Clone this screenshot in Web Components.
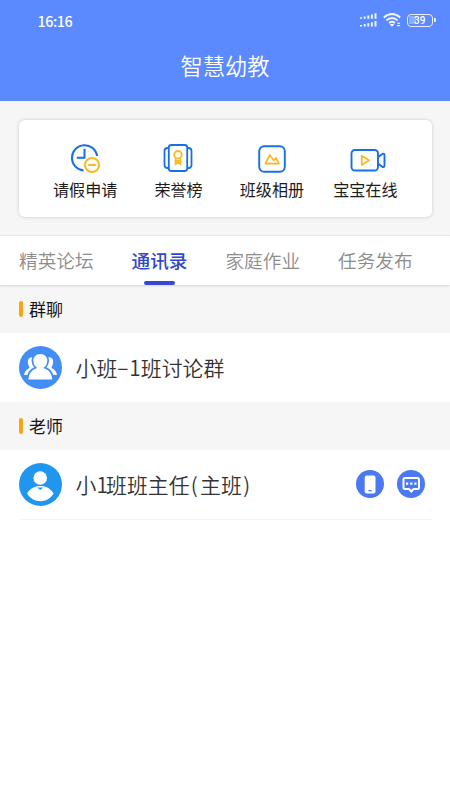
<!DOCTYPE html>
<html lang="zh-CN">
<head>
<meta charset="utf-8">
<title>智慧幼教</title>
<style>
html,body{margin:0;height:100%;background:#fff}
body{font-family:"Noto Sans CJK SC",sans-serif;color:#222}
</style>
</head>
<body>
<kid-app></kid-app>
<script>
const define = (name, html) => {
  const t = document.createElement('template');
  t.innerHTML = '<style>*{box-sizing:border-box}svg{display:block}</style>' + html;
  customElements.define(name, class extends HTMLElement {
    constructor(){ super(); this.attachShadow({mode:'open'}).append(t.content.cloneNode(true)); }
  });
};

define('status-bar', `
<style>
:host{display:flex;height:40px;padding:0 14.5px 0 37.5px;align-items:center;justify-content:space-between;color:#fff}
time{font:500 14.4px/39px "Noto Sans CJK SC",sans-serif;letter-spacing:-.5px}
.r{display:flex;align-items:center;gap:6px}
.b{display:flex;align-items:center}
.c{width:26.5px;height:13px;border:1.5px solid #e8eeff;border-radius:4px;font:500 10px/11px Roboto,sans-serif;text-align:center;background:linear-gradient(90deg,#8fadff 0 0) 1px 1px/7px 8px no-repeat}
.b i{width:2px;height:4px;background:#e8eeff;border-radius:0 1px 1px 0;margin-left:.5px}
</style>
<time>16:16</time>
<div class="r">
<svg width="18" height="14" viewBox="0 0 18 14" stroke="#eef3ff" stroke-width="2"><path d="M2 4.2v1.600M5.700 3.400v2.400M9.300 2.500v3.300M12.900 1.500v4.300M16.500.3v5.500M2 11.900v1.600M5.700 11.100v2.400M9.300 10.200v3.300M12.900 9.200v4.300M16.500 8v5.500"/></svg>
<svg width="18" height="14" viewBox="0 0 18 14" fill="none" stroke="#f3f6ff" stroke-width="1.8"><path d="M.8 4.5Q9-2.5 17.2 4.5M3.4 7.4Q9 2.7 14.6 7.4M6.1 10Q9 7.6 11.9 10"/><path d="M6.7 11h4.6L9 13.7z" fill="#fff" stroke="none"/><path d="M14.4 10.4h2.5M14 12.700h3" stroke-width="1.2"/></svg>
<div class="b"><div class="c">39</div><i></i></div>
</div>`);

define('app-header', `
<style>
:host{display:block;height:101px;background:#5b89ff;color:#fff}
h1{margin:0;text-align:center;font-size:22.3px;font-weight:350;line-height:51px}
</style><status-bar></status-bar><h1><slot></slot></h1>`);

define('tool-card', `
<style>
:host{display:grid;grid-template-columns:repeat(4,1fr);height:96.5px;margin:19px 18px 0 18.5px;padding:20px 20px 0;background:#fff;border-radius:6px;box-shadow:0 0 3px 1px #0000001c}
</style><slot></slot>`);

define('tool-item', `
<style>
:host{display:flex;flex-direction:column;align-items:center;font-size:16.1px;line-height:24px;color:#1c1c1c;white-space:nowrap}
.i{height:36.5px;display:flex;align-items:center}
</style><div class="i"><slot name="icon"></slot></div><slot></slot>`);

define('tab-bar', `
<style>
:host{display:flex;gap:38px;height:50px;margin-top:18px;padding-left:19px;background:#fff;border-top:1px solid #e8e8e8;box-shadow:0 1px 2px #00000022;position:relative}
</style><slot></slot>`);

define('tab-item', `
<style>
:host{display:flex;flex-direction:column;align-items:center;font-size:18.65px;font-weight:350;line-height:47px;height:50px;color:#8c8c8c;white-space:nowrap}
:host([active]){color:#3248c8;font-weight:500}
:host([active])::after{content:"";width:31px;height:4px;border-radius:2px;background:#3649cf;margin-top:-1.5px;margin-right:1px;flex:none}
</style><slot></slot>`);

define('section-title', `
<style>
:host{display:flex;align-items:center;gap:6px;height:48.5px;padding:.5px 19px 0;background:#f6f6f6;font-size:17px;line-height:24px;color:#151515}
i{width:4px;height:16.5px;border-radius:2px;background:#f9a413}
</style><i></i><span><slot></slot></span>`);

define('contact-row', `
<style>
:host{display:flex;align-items:center;height:68.5px;margin:0 18px 0 19px}
:host([line]){border-bottom:1px solid #f3f3f3;height:69.5px}
.n{margin-left:13.5px;flex:1;font-size:20.9px;font-weight:350;color:#333;white-space:nowrap}
.a{display:flex;gap:13px;margin-right:7px}
</style><slot name="avatar"></slot><div class="n"><slot></slot></div><div class="a"><slot name="action"></slot></div>`);

define('kid-app', `
<style>
:host{display:block;min-height:800px;background:#fff}
.top{background:#f6f6f6;overflow:hidden}
tab-bar{z-index:1}
.one{letter-spacing:-1.8px}
.p{letter-spacing:2.4px;margin-left:1px}
.q{margin-left:1.5px}
.d{vertical-align:1.5px;line-height:1;letter-spacing:.8px}
</style>
<app-header>智慧幼教</app-header>
<div class="top">
<tool-card>
<tool-item><svg slot="icon" width="30" height="32" viewBox="0 0 30 32" fill="none" stroke-width="2" style="margin-top:-1px"><path d="M13.5 28.5A12.7 12.7 0 1 1 27.2 14" stroke="#1870e5"/><path d="M14.5 6.8v9H6.8" stroke="#1870e5"/><circle cx="22" cy="23" r="7" stroke="#f8b921"/><path d="M18.3 23h7.5" stroke="#f8b921"/></svg>请假申请</tool-item>
<tool-item><svg slot="icon" width="30" height="30" viewBox="0 0 30 30" fill="none" stroke="#1870e5" stroke-width="1.8" style="margin-right:1px"><rect x="5.8" y="2" width="18.4" height="26" rx="2.5"/><path d="M5.5 5H4Q1.5 5.5 1.5 8v14Q1.5 24.5 4 25h1.5M24.5 5H26q2.5.5 2.5 3v14q0 2.500-2.500 3h-1.500"/><g stroke="#f8b921"><circle cx="15" cy="11.800" r="3.800"/><path d="M12.600 15.200v5.900l2.400-1.500 2.400 1.500v-5.900M12.600 17.800h4.800"/></g></svg>荣誉榜</tool-item>
<tool-item><svg slot="icon" width="28" height="28" viewBox="0 0 28 28" fill="none" stroke="#1870e5" stroke-width="1.9" stroke-linejoin="round" style="margin-top:1px"><rect x="1.200" y="1.200" width="25.600" height="25.600" rx="5"/><path d="M7.400 18.700L11.800 10l3.900 5.500 2.300-2.600 2.900 5.800z" stroke="#f8b921" stroke-width="1.700"/></svg>班级相册</tool-item>
<tool-item><svg slot="icon" width="36" height="24" viewBox="0 0 36 24" fill="none" stroke="#1870e5" stroke-width="1.900" stroke-linejoin="round" style="margin:3px 0 0 6px"><rect x="1.500" y="2" width="26.500" height="20.500" rx="3.500"/><path d="M28 9.200l4.300-3.300q2.200-.7 2.200 1.300v10.300q0 2-2.200 1.300L28 15.500"/><path d="M11.700 7.700v9.300l7.500-4.700z" stroke="#f8b921" stroke-width="1.700"/></svg>宝宝在线</tool-item>
</tool-card>
<tab-bar><tab-item>精英论坛</tab-item><tab-item active>通讯录</tab-item><tab-item>家庭作业</tab-item><tab-item>任务发布</tab-item></tab-bar>
<section-title>群聊</section-title>
</div>
<contact-row>
<svg slot="avatar" width="43" height="43" viewBox="0 0 43 43"><circle cx="21.500" cy="21.500" r="21.500" fill="#438ef5"/><g fill="#fff" stroke="#438ef5" stroke-width="1.800"><path d="M14 10c-5 0-6.500 3.500-6 7 .2 2 1 3.500 1.500 4.500C6.500 23 4.200 25 4 30h15V12z"/><path d="M29 10c5 0 6.500 3.500 6 7-.2 2-1 3.500-1.500 4.500 3 1.500 5.300 3.500 5.500 8.500H24V12z"/><path d="M21.300 7c-5.500 0-8.300 4-7.800 8.500.3 2.700 1.300 4.700 3 6.200-5 2-8 5.300-8.200 12.800h26c-.2-7.500-3.200-10.800-8.200-12.800 1.700-1.500 2.700-3.500 3-6.200C29.600 11 26.800 7 21.300 7z"/></g></svg>小班<span class="d">–</span>1班讨论群</contact-row>
<section-title>老师</section-title>
<contact-row line>
<svg slot="avatar" width="43" height="43" viewBox="0 0 43 43"><circle cx="21.500" cy="21.500" r="21.500" fill="#2196ef"/><circle cx="21.200" cy="15" r="6.800" fill="#fff"/><path d="M8 30.500C11.500 25 16 23 21.500 23S31 25 34.500 30.500C31 36 26.500 38.200 21.500 38.200S11.500 36 8 30.500z" fill="#fff"/><path d="M18.300 24.500h6l-3 2.500z" fill="#2196ef"/></svg>小<span class="one">1</span>班班主任<span class="p">(</span>主班<span class="q">)</span>
<svg slot="action" width="28" height="28" viewBox="0 0 28 28"><circle cx="14" cy="14" r="14" fill="#4b79f3"/><rect x="8.700" y="5.500" width="10.800" height="18" rx="2" fill="#fff"/><path d="M12.400 20.700h3.300" stroke="#4b79f3" stroke-width="1.300"/></svg>
<svg slot="action" width="28" height="28" viewBox="0 0 28 28"><circle cx="14" cy="14" r="14" fill="#4b79f3"/><path d="M8 8h12.500q1.500 0 1.500 1.500v8q0 1.500-1.500 1.500h-4L14.300 21.500 12 19H8q-1.500 0-1.500-1.500v-8Q6.500 8 8 8z" fill="none" stroke="#fff" stroke-width="2"/><path d="M9 13.600h2.200M13.200 13.600h2.200M17.300 13.600h2.200" stroke="#fff" stroke-width="2.200"/></svg>
</contact-row>`);
</script>
</body>
</html>
